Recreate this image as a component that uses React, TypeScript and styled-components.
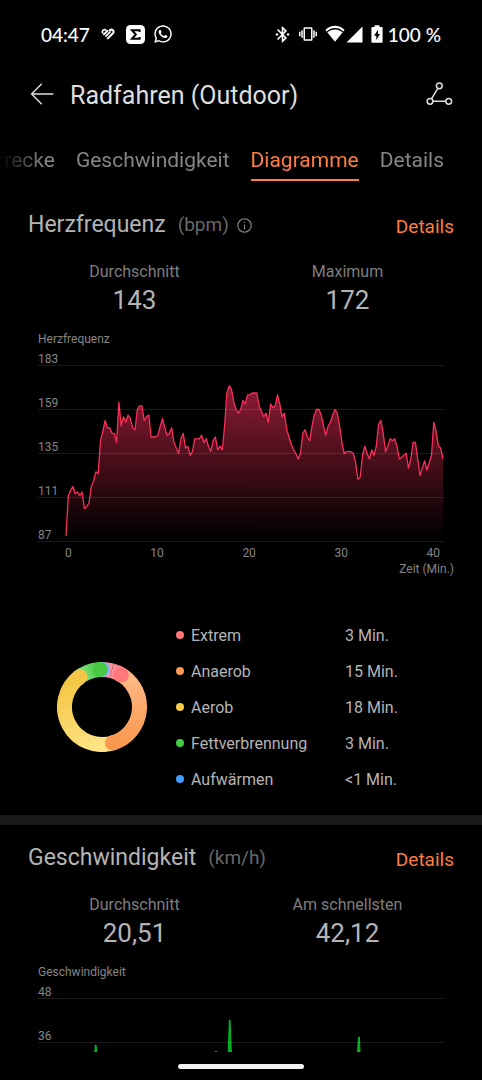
import React from "react";
import styled, { createGlobalStyle } from "styled-components";
import { FaWhatsapp } from "react-icons/fa";
import { MdBluetoothConnected, MdVibration } from "react-icons/md";

const GlobalStyle = createGlobalStyle`
  * { box-sizing: border-box; }
  html, body { margin: 0; padding: 0; background: #000; }
  body { font-family: Roboto, "Liberation Sans", sans-serif; color: #b4b4b4; }
  h1, h2, p, ul, dl, dd, figure { margin: 0; padding: 0; font-weight: 400; }
  ul { list-style: none; }
  button { font: inherit; color: inherit; background: none; border: 0; margin: 0; padding: 0; cursor: pointer; }
  svg { display: block; flex: none; }
`;

const Screen = styled.div`
  display: flex;
  flex-direction: column;
  min-height: 100vh;
  overflow: hidden;
`;

const StatusBar = styled.div`
  display: flex;
  justify-content: space-between;
  align-items: center;
  height: 68px;
  padding: 0 41px;
  color: #fff;
  font-family: Lato, Roboto, sans-serif;
  font-size: 19px;
  font-weight: 500;
`;

const StatusGroup = styled.div<{ $gap: number }>`
  display: flex;
  align-items: center;
  gap: ${(p) => p.$gap}px;
`;

const Header = styled.header`
  display: flex;
  align-items: center;
  gap: 16px;
  height: 54px;
  padding: 0 28px 0 30px;
  color: #dedede;
`;

const Title = styled.h1`
  flex: 1;
  padding-top: 2px;
  font-size: 25px;
  line-height: 32px;
`;

const Tabs = styled.div`
  display: flex;
  justify-content: flex-end;
  gap: 21px;
  padding: 24px 38px 0 0;
  overflow: hidden;
  mask-image: linear-gradient(to right, transparent, #000 44px);
`;

const Tab = styled.button<{ $active?: boolean }>`
  flex: none;
  padding-bottom: 5px;
  border-bottom: 2px solid ${(p) => (p.$active ? "#ff7d41" : "transparent")};
  color: ${(p) => (p.$active ? "#ff7d41" : "#858585")};
  font-size: 21px;
  line-height: 28px;
`;

const Section = styled.section<{ $top: number; $bottom?: number }>`
  padding: ${(p) => p.$top}px 28px ${(p) => p.$bottom ?? 0}px;
`;

const SectionHead = styled.div`
  display: flex;
  align-items: flex-end;
  justify-content: space-between;
`;

const HeadLeft = styled.div`
  display: flex;
  align-items: center;
`;

const SectionTitle = styled.h2`
  font-size: 23px;
  line-height: 32px;
`;

const Unit = styled.span`
  margin: 0 8px 0 12px;
  color: #686868;
  font-size: 19px;
  line-height: 32px;
`;

const DetailsLink = styled.a`
  color: #ff7d41;
  font-size: 19px;
  line-height: 28px;
  text-decoration: none;
`;

const Stats = styled.dl`
  display: grid;
  grid-template-columns: 1fr 1fr;
  margin-top: 21px;
  text-align: center;
`;

const StatLabel = styled.dt`
  color: #7e7e7e;
  font-size: 16px;
  line-height: 20px;
`;

const StatValue = styled.dd`
  margin-top: 2px;
  font-size: 26px;
  line-height: 32px;
`;

const Chart = styled.figure`
  margin-top: 15px;
  color: #858585;
  font-size: 12px;
  line-height: 16px;
`;

const ChartBody = styled.div`
  padding: 0 10px;
`;

const Plot = styled.div`
  display: grid;
  > * { grid-area: 1 / 1; }
`;

const Series = styled.svg<{ $height: number }>`
  align-self: end;
  width: 100%;
  height: ${(p) => p.$height}px;
`;

const Bands = styled.div`
  z-index: 1;
`;

const Band = styled.div<{ $height: number; $line?: boolean }>`
  display: flex;
  align-items: flex-end;
  height: ${(p) => p.$height}px;
  border-bottom: ${(p) => (p.$line === false ? "0" : "1px solid rgba(255, 255, 255, 0.1)")};
  line-height: 12px;
`;

const Ticks = styled.div`
  display: flex;
  justify-content: space-between;
  padding: 3px 4px 0 27px;
`;

const AxisTitle = styled.p`
  text-align: right;
`;

const Zones = styled.div`
  display: flex;
  align-items: flex-start;
  gap: 29px;
  margin-top: 41px;
  padding-left: 29px;
`;

const DonutChart = styled.svg`
  margin-top: 44px;
`;

const Legend = styled.ul`
  flex: 1;
`;

const LegendRow = styled.li`
  display: grid;
  grid-template-columns: 8px 1fr 109px;
  column-gap: 7px;
  align-items: center;
  font-size: 16px;
  line-height: 36px;
`;

const Dot = styled.span<{ $color: string }>`
  height: 8px;
  margin-bottom: 3px;
  border-radius: 50%;
  background: ${(p) => p.$color};
`;

const Divider = styled.div`
  height: 10px;
  background: #1a1a1a;
`;

const NavBar = styled.div`
  display: flex;
  align-items: center;
  justify-content: center;
  height: 28px;
`;

const Pill = styled.div`
  width: 126px;
  height: 5px;
  border-radius: 3px;
  background: #f2f2f2;
`;

/* Heart rate in bpm, four samples a minute. */
const heartRate = [
  90, 112, 115, 117, 113, 114, 112, 114, 105, 106, 108, 117, 120, 125, 124, 142, 147, 153, 149, 149,
  146, 146, 141, 163, 150, 155, 152, 156, 154, 149, 148, 159, 161, 161, 153, 155, 156, 144, 144, 144,
  145, 150, 154, 149, 145, 146, 149, 141, 138, 135, 143, 146, 138, 139, 134, 136, 143, 143, 143, 145,
  141, 143, 139, 136, 142, 144, 137, 139, 137, 150, 168, 172, 170, 163, 159, 157, 159, 164, 162, 167,
  167, 168, 168, 168, 161, 158, 155, 157, 152, 162, 160, 161, 167, 162, 155, 157, 148, 144, 140, 137,
  135, 132, 135, 146, 148, 144, 142, 150, 156, 159, 159, 156, 150, 145, 150, 152, 156, 159, 157, 150,
  141, 135, 136, 136, 136, 135, 130, 121, 122, 134, 139, 135, 132, 137, 134, 139, 151, 153, 146, 136,
  139, 143, 142, 143, 139, 132, 133, 134, 135, 127, 132, 141, 141, 132, 123, 127, 131, 126, 130, 134,
  152, 147, 139, 138, 132,
];

const START_X = 28;
const STEP_X = 377 / (heartRate.length - 1);
const line = heartRate
  .map((v, i) => `${(START_X + i * STEP_X).toFixed(1)},${(175.5 - ((v - 87) * 44) / 24).toFixed(1)}`)
  .join(" L");

const zones = [
  { name: "Extrem", time: "3 Min.", color: "#ff7479" },
  { name: "Anaerob", time: "15 Min.", color: "#fb9b53" },
  { name: "Aerob", time: "18 Min.", color: "#f7ca47" },
  { name: "Fettverbrennung", time: "3 Min.", color: "#43cb41" },
  { name: "Aufwärmen", time: "<1 Min.", color: "#409cff" },
];

const RADIUS = 37.5;
const at = (deg: number) => {
  const a = (deg * Math.PI) / 180;
  return [45 + RADIUS * Math.sin(a), 45 - RADIUS * Math.cos(a)];
};

function Arc({ from, to, id, light, dark, cap = true }: {
  from: number; to: number; id: string; light: string; dark: string; cap?: boolean;
}) {
  const [x1, y1] = at(from);
  const [x2, y2] = at(to);
  return (
    <g>
      <linearGradient id={id} gradientUnits="userSpaceOnUse" x1={x1} y1={y1} x2={x2} y2={y2}>
        <stop offset="0" stopColor={light} />
        <stop offset="1" stopColor={dark} />
      </linearGradient>
      <path
        d={`M${x1} ${y1} A${RADIUS} ${RADIUS} 0 ${to - from > 180 ? 1 : 0} 1 ${x2} ${y2}`}
        fill="none"
        stroke={`url(#${id})`}
        strokeWidth="15"
      />
      {cap && <circle cx={x2} cy={y2} r="7.5" fill={dark} />}
    </g>
  );
}

function Donut() {
  return (
    <DonutChart width="90" height="90" viewBox="0 0 90 90" aria-hidden="true">
      <Arc id="z0" from={0} to={15} light="#ff9aa8" dark="#ff94a0" cap={false} />
      <Arc id="z5" from={355} to={361} light="#8ec4ff" dark="#78b6fb" />
      <Arc id="z4" from={318} to={357} light="#8fe892" dark="#47c943" />
      <Arc id="z3" from={160} to={324} light="#fde587" dark="#f4c746" />
      <Arc id="z2" from={25} to={164} light="#fdb985" dark="#f9994f" />
      <Arc id="z1" from={15.1} to={31} light="#ff919b" dark="#ff777c" />
    </DonutChart>
  );
}

function HealthIcon() {
  return (
    <svg width="14" height="12" viewBox="0 0 14 12" fill="none" stroke="#fff" strokeWidth="1.7" strokeLinecap="round" strokeLinejoin="round">
      <path d="M4.6 1.9 C2.6 1 0.8 2.8 1.6 4.8" />
      <path d="M2.9 6.4 L6.6 2.8" strokeWidth="2" />
      <path d="M4.9 8.2 L9.2 3.8" />
      <path d="M9 2 C11.4 0.8 13.6 3.2 12 5.2 L6.8 10.4" strokeWidth="2" />
    </svg>
  );
}

function SigmaIcon() {
  return (
    <svg width="19" height="19" viewBox="0 0 19 19">
      <rect width="19" height="19" rx="4.5" fill="#fff" />
      <path d="M13.6 7 V5.2 H6 L9.8 9.5 L6 13.8 H13.6 V12" fill="none" stroke="#000" strokeWidth="2" />
    </svg>
  );
}

function WifiIcon() {
  return (
    <svg width="20" height="18" viewBox="0 0 20 18" fill="#fff">
      <path d="M0.4 4.9 C6 -0.5 14 -0.5 19.6 4.9 L18.3 6.4 C13.4 1.9 6.6 1.9 1.7 6.4 Z" />
      <path d="M2.3 7.3 C7 3.4 13 3.4 17.7 7.3 L10 16.8 Z" />
    </svg>
  );
}

function SignalIcon() {
  return (
    <svg width="17" height="17" viewBox="0 0 17 17" fill="#fff">
      <path d="M16.5 0.5 V16.5 H0.5 Z" />
    </svg>
  );
}

function BatteryIcon() {
  return (
    <svg width="12" height="18" viewBox="0 0 12 18">
      <path d="M3.6 0.3 H8.4 V2 H10.6 Q11.6 2 11.6 3 V16.7 Q11.6 17.7 10.6 17.7 H1.4 Q0.4 17.7 0.4 16.7 V3 Q0.4 2 1.4 2 H3.6 Z" fill="#fff" />
      <path d="M7 4.8 L3 10.8 H5.3 V15 L9 9 H7 Z" fill="#000" />
    </svg>
  );
}

function BackIcon() {
  return (
    <svg width="24" height="24" viewBox="0 0 24 24" fill="none" stroke="currentColor" strokeWidth="1.4">
      <path d="M1.6 11 H23.5 M11.8 0.8 L1.6 11 L11.8 21.2" />
    </svg>
  );
}

function RouteIcon() {
  return (
    <svg width="28" height="28" viewBox="0 0 28 28" fill="none" stroke="currentColor" strokeWidth="1.5">
      <circle cx="13.3" cy="4.8" r="2.9" />
      <circle cx="4" cy="20.3" r="2.9" />
      <circle cx="22.7" cy="20.3" r="2.9" />
      <path d="M11.8 7.3 L5.5 17.8 M6.9 20.3 H19.8" />
    </svg>
  );
}

function InfoIcon() {
  return (
    <svg width="15" height="15" viewBox="0 0 15 15" fill="none" stroke="#8a8a8a" strokeWidth="1.1">
      <circle cx="7.5" cy="7.5" r="6.7" />
      <path d="M7.5 6.4 V11.2 M7.5 3.8 V5" />
    </svg>
  );
}

function Stat({ label, value }: { label: string; value: string }) {
  return (
    <div>
      <StatLabel>{label}</StatLabel>
      <StatValue>{value}</StatValue>
    </div>
  );
}

export default function App() {
  return (
    <Screen>
      <GlobalStyle />
      <StatusBar>
        <StatusGroup $gap={11}>
          <span>04:47</span>
          <HealthIcon />
          <StatusGroup $gap={8}>
            <SigmaIcon />
            <FaWhatsapp size={20} />
          </StatusGroup>
        </StatusGroup>
        <StatusGroup $gap={5}>
          <StatusGroup $gap={8}>
            <StatusGroup $gap={7}>
              <MdBluetoothConnected size={19} />
              <MdVibration size={18} />
            </StatusGroup>
            <StatusGroup $gap={1}>
              <WifiIcon />
              <SignalIcon />
            </StatusGroup>
            <BatteryIcon />
          </StatusGroup>
          <span>100 %</span>
        </StatusGroup>
      </StatusBar>

      <Header>
        <button aria-label="Zurück">
          <BackIcon />
        </button>
        <Title>Radfahren (Outdoor)</Title>
        <button aria-label="Route">
          <RouteIcon />
        </button>
      </Header>

      <Tabs role="tablist">
        <Tab role="tab">Strecke</Tab>
        <Tab role="tab">Geschwindigkeit</Tab>
        <Tab role="tab" aria-selected="true" $active>Diagramme</Tab>
        <Tab role="tab">Details</Tab>
      </Tabs>

      <Section $top={28} $bottom={17}>
        <SectionHead>
          <HeadLeft>
            <SectionTitle>Herzfrequenz</SectionTitle>
            <Unit>(bpm)</Unit>
            <button aria-label="Info">
              <InfoIcon />
            </button>
          </HeadLeft>
          <DetailsLink href="#herzfrequenz">Details</DetailsLink>
        </SectionHead>
        <Stats>
          <Stat label="Durchschnitt" value="143" />
          <Stat label="Maximum" value="172" />
        </Stats>
        <Chart>
          <ChartBody>
            <p>Herzfrequenz</p>
            <Plot>
              <Series $height={176} viewBox="0 0 406 176" preserveAspectRatio="none">
                <linearGradient id="pulse" gradientUnits="userSpaceOnUse" x1="0" y1="20" x2="0" y2="172">
                  <stop offset="0" stopColor="#8e1c34" />
                  <stop offset="1" stopColor="#8e1c34" stopOpacity="0" />
                </linearGradient>
                <path d={`M${START_X},175.5 L${line} L${START_X + 377},175.5 Z`} fill="url(#pulse)" />
                <path
                  d={`M${line}`}
                  fill="none"
                  stroke="#f82f58"
                  strokeWidth="1.3"
                  strokeLinejoin="round"
                  vectorEffect="non-scaling-stroke"
                />
              </Series>
              <Bands>
                <Band $height={19}>183</Band>
                <Band $height={44}>159</Band>
                <Band $height={44}>135</Band>
                <Band $height={44}>111</Band>
                <Band $height={44}>87</Band>
              </Bands>
            </Plot>
            <Ticks>
              <span>0</span>
              <span>10</span>
              <span>20</span>
              <span>30</span>
              <span>40</span>
            </Ticks>
          </ChartBody>
          <AxisTitle>Zeit (Min.)</AxisTitle>
        </Chart>
        <Zones>
          <Donut />
          <Legend>
            {zones.map((z) => (
              <LegendRow key={z.name}>
                <Dot $color={z.color} />
                <span>{z.name}</span>
                <span>{z.time}</span>
              </LegendRow>
            ))}
          </Legend>
        </Zones>
      </Section>

      <Divider />

      <Section $top={17}>
        <SectionHead>
          <HeadLeft>
            <SectionTitle>Geschwindigkeit</SectionTitle>
            <Unit>(km/h)</Unit>
          </HeadLeft>
          <DetailsLink href="#geschwindigkeit">Details</DetailsLink>
        </SectionHead>
        <Stats>
          <Stat label="Durchschnitt" value="20,51" />
          <Stat label="Am schnellsten" value="42,12" />
        </Stats>
        <Chart>
          <ChartBody>
            <p>Geschwindigkeit</p>
            <Plot>
              <Series $height={53} viewBox="0 0 406 53" preserveAspectRatio="none">
                <g fill="#00a51c" stroke="#00d22a" strokeWidth="0.8">
                  <path d="M56.8 53 L57.4 46 H58 L58.8 53 Z" />
                  <path d="M177.2 53 L178 52 L178.8 53 Z" />
                  <path d="M190.2 53 L191.4 21 H192 L193.4 53 Z" />
                  <path d="M319.4 53 L320.6 38 H321.4 L322 53 Z" />
                </g>
              </Series>
              <Bands>
                <Band $height={19}>48</Band>
                <Band $height={44}>36</Band>
                <Band $height={9} $line={false} />
              </Bands>
            </Plot>
          </ChartBody>
        </Chart>
      </Section>

      <NavBar>
        <Pill />
      </NavBar>
    </Screen>
  );
}
